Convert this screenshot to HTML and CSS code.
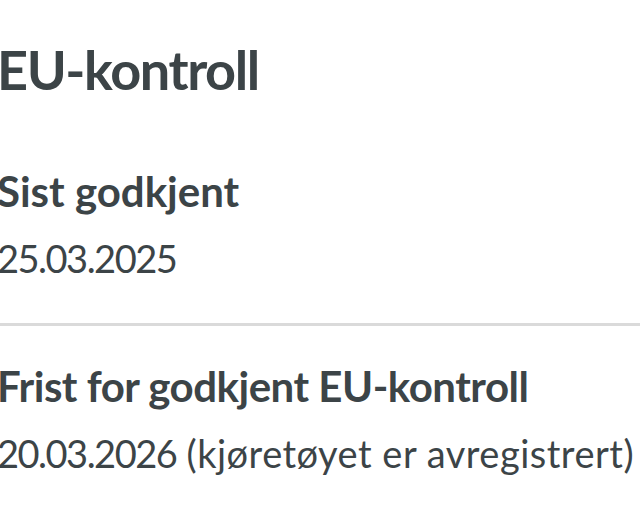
FILE: index.html
```html
<!DOCTYPE html>
<html lang="no">
<head>
<meta charset="utf-8">
<title>EU-kontroll</title>
<link rel="stylesheet" href="styles.css">
</head>
<body>
<main class="page">
  <h1 class="title">EU-kontroll</h1>
  <section class="item">
    <h2 class="label">Sist godkjent</h2>
    <p class="value"><span class="num">25.03.2025</span></p>
  </section>
  <hr class="divider">
  <section class="item">
    <h2 class="label">Frist for godkjent EU-kontroll</h2>
    <p class="value"><span class="num">20.03.2026</span> (kjøretøyet er avregistrert)</p>
  </section>
</main>
</body>
</html>
```

FILE: styles.css
```css
html, body {
  margin: 0;
  padding: 0;
  background: #ffffff;
}

body {
  width: 640px;
  height: 516px;
  overflow: hidden;
}

.page {
  margin-left: -3px;
  padding-top: 38px;
  color: #3c4447;
  font-family: Lato, "Open Sans", sans-serif;
  white-space: nowrap;
}

.title {
  margin: 0;
  font-size: 54px;
  line-height: 64px;
  font-weight: 700;
  letter-spacing: -1.4px;
}

.item {
  display: flex;
  flex-direction: column;
  gap: 19px;
}

.title + .item {
  margin-top: 64px;
}

.label {
  margin: 0;
  font-size: 42px;
  line-height: 50px;
  font-weight: 700;
}

.divider + .item .label {
  letter-spacing: -0.5px;
}

.value {
  margin: 0;
  font-size: 38px;
  line-height: 46px;
  font-weight: 400;
  letter-spacing: 0.5px;
}

.num {
  letter-spacing: -1.5px;
}

.divider {
  margin: 42px 0 35px 3px;
  border: 0;
  height: 3px;
  background: #dadada;
}
```
